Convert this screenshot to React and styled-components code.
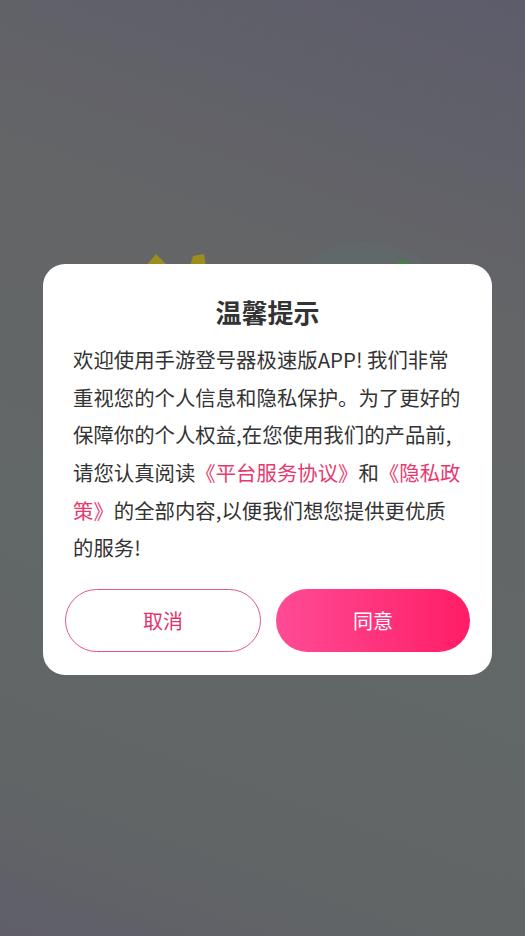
import React from "react";
import styled, { createGlobalStyle } from "styled-components";

const GlobalStyle = createGlobalStyle`
  html, body {
    margin: 0;
    padding: 0;
    height: 100%;
  }
  body {
    font-family: "Noto Sans CJK SC", "Noto Sans", sans-serif;
    -webkit-font-smoothing: antialiased;
  }
`;

const Screen = styled.div`
  position: relative;
  width: 100%;
  min-height: 100vh;
  box-sizing: border-box;
  padding: 3px 0 0 10px;
  overflow: hidden;
  background: linear-gradient(200deg, #5d5c6b 0%, #646567 30%, #626768 60%, #616566 85%, #605f69 100%);
  display: flex;
  align-items: center;
  justify-content: center;
`;

// faint illustration of the page behind the mask
const Backdrop = styled.svg`
  position: absolute;
  left: 0;
  top: 0;
  width: 525px;
  height: 936px;
  pointer-events: none;
`;

const Dialog = styled.div`
  position: relative;
  width: 449px;
  box-sizing: border-box;
  background: #fff;
  border-radius: 22px;
  padding: 28px 22px 23px;
`;

const Title = styled.h2`
  margin: 0;
  text-align: center;
  font-size: 26px;
  line-height: 40px;
  font-weight: 700;
  color: #333;
`;

const Body = styled.p`
  margin: 9px 0 0;
  padding: 0 8px;
  font-size: 20.4px;
  line-height: 37.7px;
  color: #333;
`;

const Link = styled.span`
  color: #e8396e;
`;

const Actions = styled.div`
  display: flex;
  gap: 15px;
  margin-top: 22px;
`;

const Button = styled.button`
  flex: 1;
  height: 63px;
  border-radius: 32px;
  font-family: inherit;
  font-size: 20px;
  cursor: pointer;
  border: ${({ primary }) => (primary ? "none" : "1px solid #e0588a")};
  background: ${({ primary }) =>
    primary ? "linear-gradient(90deg, #ff4b95 0%, #ff1d66 100%)" : "#fff"};
  color: ${({ primary }) => (primary ? "#fff" : "#e2336b")};
`;

export default function App() {
  return (
    <>
      <GlobalStyle />
      <Screen>
        <Backdrop viewBox="0 0 525 936">
          <ellipse cx="365" cy="300" rx="75" ry="58" fill="#5f6a6a" opacity="0.6" />
          <polygon points="146,266 156,254 168,266" fill="#9c8e1e" />
          <polygon points="190,266 193,256 204,254 206,266" fill="#9c8e1e" />
          <circle cx="403" cy="270" r="9" fill="#3f8a3e" />
        </Backdrop>
        <Dialog>
          <Title>温馨提示</Title>
          <Body>
            欢迎使用手游登号器极速版APP! 我们非常
            <br />
            重视您的个人信息和隐私保护。为了更好的
            <br />
            保障你的个人权益,在您使用我们的产品前,
            <br />
            请您认真阅读<Link>《平台服务协议》</Link>和<Link>《隐私政</Link>
            <br />
            <Link>策》</Link>的全部内容,以便我们想您提供更优质
            <br />
            的服务!
          </Body>
          <Actions>
            <Button>取消</Button>
            <Button primary>同意</Button>
          </Actions>
        </Dialog>
      </Screen>
    </>
  );
}
